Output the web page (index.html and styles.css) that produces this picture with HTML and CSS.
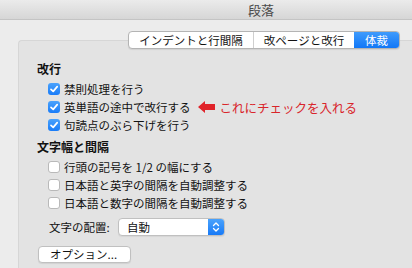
FILE: index.html
```html
<!DOCTYPE html>
<html lang="ja">
<head>
    <meta charset="UTF-8">
    <title>段落</title>
    <link rel="stylesheet" href="styles.css">
</head>
<body>
    <div class="titlebar">段落</div>

    <div class="window">
        <!-- Tabs -->
        <div class="tabs">
            <div class="tab tab-indent">インデントと行間隔</div>
            <div class="tab tab-page">改ページと改行</div>
            <div class="tab tab-layout selected">体裁</div>
        </div>

        <!-- Panel -->
        <div class="panel">
            <div class="heading">改行</div>
            <div class="row">
                <span class="check on"><svg viewBox="0 0 12 12" width="12" height="12"><path d="M3 6.3 L5.2 8.4 L9.2 3.6" fill="none" stroke="#fff" stroke-width="1.7" stroke-linecap="round" stroke-linejoin="round"/></svg></span>
                <span>禁則処理を行う</span>
            </div>
            <div class="row">
                <span class="check on"><svg viewBox="0 0 12 12" width="12" height="12"><path d="M3 6.3 L5.2 8.4 L9.2 3.6" fill="none" stroke="#fff" stroke-width="1.7" stroke-linecap="round" stroke-linejoin="round"/></svg></span>
                <span>英単語の途中で改行する</span>
                <svg class="arrow" viewBox="0 0 17 12" width="17" height="12"><path d="M0 6 L7 0 L7 3 L17 3 L17 9 L7 9 L7 12 Z" fill="#e0232a"/></svg>
                <span class="note">これにチェックを入れる</span>
            </div>
            <div class="row">
                <span class="check on"><svg viewBox="0 0 12 12" width="12" height="12"><path d="M3 6.3 L5.2 8.4 L9.2 3.6" fill="none" stroke="#fff" stroke-width="1.7" stroke-linecap="round" stroke-linejoin="round"/></svg></span>
                <span>句読点のぶら下げを行う</span>
            </div>

            <div class="heading second">文字幅と間隔</div>
            <div class="row">
                <span class="check"></span>
                <span>行頭の記号を 1/2 の幅にする</span>
            </div>
            <div class="row">
                <span class="check"></span>
                <span>日本語と英字の間隔を自動調整する</span>
            </div>
            <div class="row">
                <span class="check"></span>
                <span>日本語と数字の間隔を自動調整する</span>
            </div>

            <div class="select-row">
                <span class="label">文字の配置:</span>
                <div class="select">
                    <span class="select-text">自動</span>
                    <span class="stepper"><svg viewBox="0 0 16 18" width="16" height="18"><path d="M5.5 7.5 L8 5 L10.5 7.5 M5.5 10.5 L8 13 L10.5 10.5" fill="none" stroke="#fff" stroke-width="1.3" stroke-linecap="round" stroke-linejoin="round"/></svg></span>
                </div>
            </div>

            <div class="button">オプション...</div>
        </div>
    </div>
</body>
</html>
```

FILE: styles.css
```css
html, body {
    margin: 0;
    padding: 0;
}
body {
    width: 412px;
    height: 268px;
    overflow: hidden;
    background-color: #ececec;
    font-family: "Noto Sans CJK JP", "Noto Sans", sans-serif;
    font-size: 11.5px;
    color: #121212;
}
.titlebar {
    height: 20px;
    line-height: 19px;
    padding-left: 110px;
    text-align: center;
    font-size: 13px;
    color: #4a4a4a;
    background: linear-gradient(#ebebeb, #d6d6d6);
    border-bottom: 1px solid #c4c4c4;
    box-sizing: border-box;
}
.window {
    padding-top: 11px;
}
.tabs {
    position: relative;
    z-index: 1;
    display: flex;
    margin-left: 128px;
    width: 272px;
    height: 18px;
    background: #fff;
    border: 1px solid #b4b4b4;
    border-radius: 4px;
    box-sizing: border-box;
    box-shadow: 0 1px 1px rgba(0,0,0,0.08);
    overflow: hidden;
}
.tab {
    line-height: 16px;
    text-align: center;
}
.tab-indent {
    width: 124px;
    border-right: 1px solid #cfcfcf;
}
.tab-page {
    width: 100px;
}
.tab-layout {
    flex: 1;
}
.tab.selected {
    background: linear-gradient(#3f9bfc, #1177f7);
    color: #fff;
}
.panel {
    margin-top: -9px;
    margin-left: 18px;
    height: 240px;
    padding: 19px 0 0 18px;
    background-color: #e3e3e3;
    border-top: 1px solid #d6d6d6;
    border-left: 1px solid #d6d6d6;
    border-top-left-radius: 4px;
    box-sizing: border-box;
}
.heading {
    font-weight: bold;
    font-size: 12px;
    line-height: 18px;
    margin-bottom: 2px;
}
.heading.second {
    margin-top: 4px;
}
.row {
    display: flex;
    align-items: center;
    height: 18px;
    padding-left: 11px;
}
.check {
    display: inline-block;
    width: 12px;
    height: 12px;
    margin-right: 4px;
    border-radius: 3px;
    background: #fff;
    border: 1px solid #b9b9b9;
    box-sizing: border-box;
    flex-shrink: 0;
}
.check.on {
    background: linear-gradient(#4aa2fc, #197cf8);
    border: none;
}
.check svg {
    display: block;
}
.arrow {
    margin-left: 7px;
}
.note {
    margin-left: 5px;
    font-size: 12.5px;
    color: #d9252b;
}
.select-row {
    display: flex;
    align-items: center;
    margin-top: 6px;
    padding-left: 12px;
    height: 18px;
}
.label {
    width: 69px;
}
.select {
    display: flex;
    width: 107px;
    height: 18px;
    background: #fff;
    border: 1px solid #c0c0c0;
    border-radius: 4px;
    box-sizing: border-box;
    overflow: hidden;
    box-shadow: 0 1px 1px rgba(0,0,0,0.06);
}
.select-text {
    flex: 1;
    padding-left: 8px;
    line-height: 16px;
}
.stepper {
    width: 16px;
    background: linear-gradient(#4aa2fc, #187af7);
}
.stepper svg {
    display: block;
    margin-top: -1px;
}
.button {
    margin-top: 10px;
    margin-left: 1px;
    width: 93px;
    height: 17px;
    line-height: 15px;
    padding-left: 11px;
    background: #fff;
    border: 1px solid #c0c0c0;
    border-radius: 4px;
    box-sizing: border-box;
    box-shadow: 0 1px 1px rgba(0,0,0,0.08);
}
```
